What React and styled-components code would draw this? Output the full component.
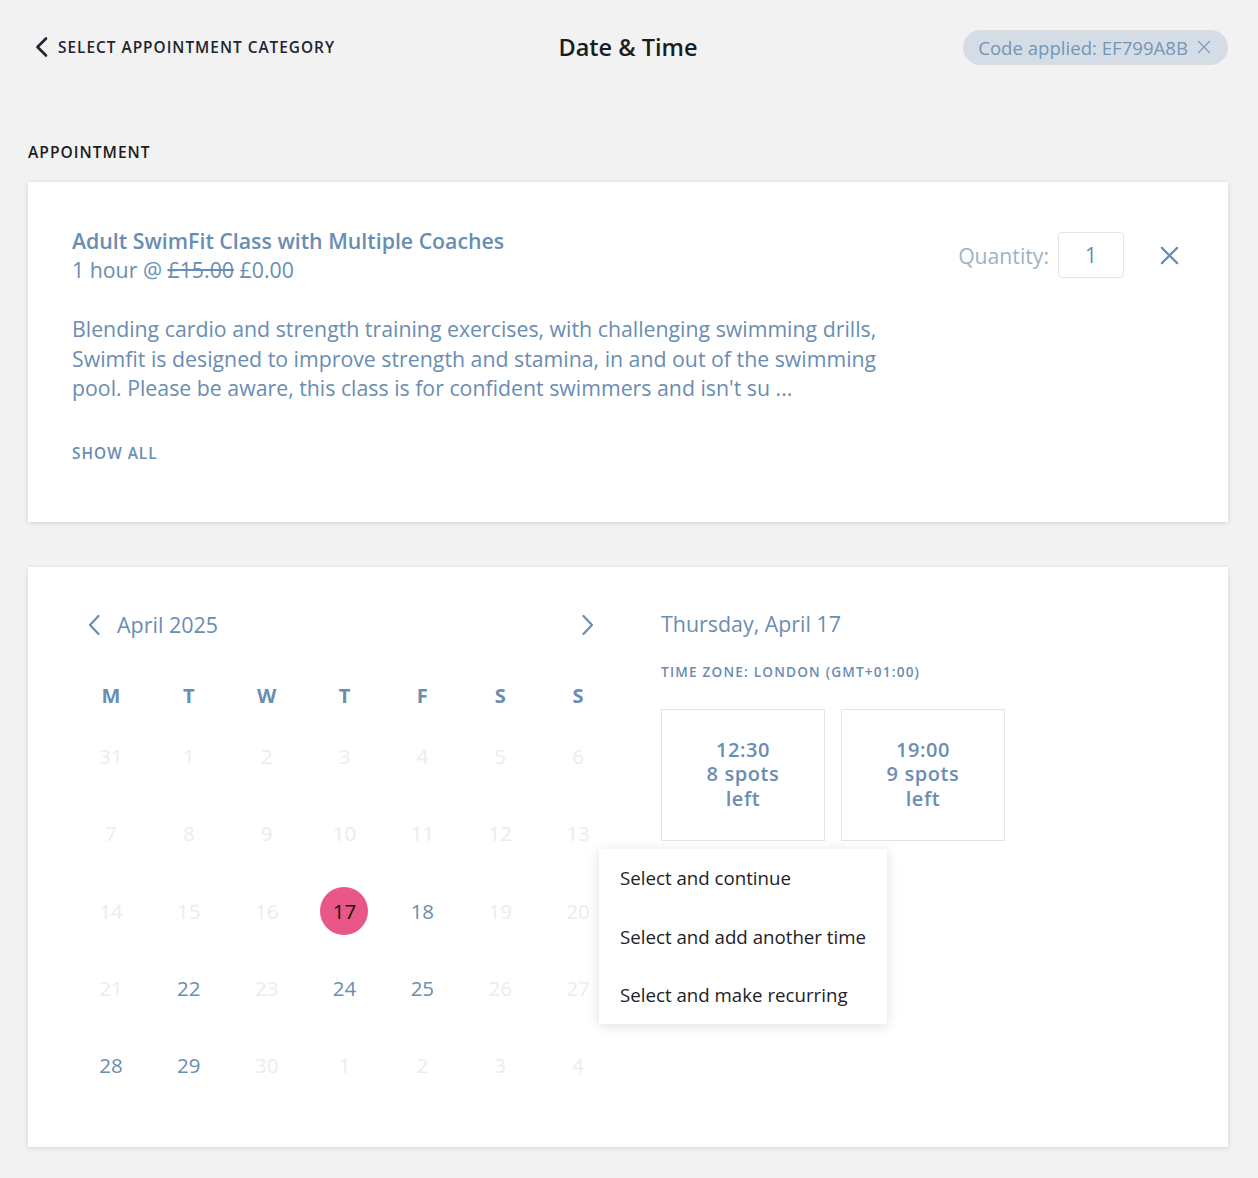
import React from "react";
import styled, { createGlobalStyle } from "styled-components";

const Global = createGlobalStyle`
  html, body { margin: 0; padding: 0; background: #f2f2f2; }
  body { font-family: "Open Sans", "Noto Sans", Arial, sans-serif; -webkit-font-smoothing: antialiased; }
  * { box-sizing: border-box; }
`;

const BLUE = "#6a8db2";
const FAINT = "#e9edf2";

const Page = styled.div`
  padding: 0 30px 30px 28px;
  min-height: 1178px;
`;

const Header = styled.header`
  display: grid;
  grid-template-columns: 1fr auto 1fr;
  align-items: center;
  height: 94px;
`;

const BackLink = styled.a`
  display: flex;
  align-items: center;
  gap: 9px;
  padding-left: 7px;
  color: #1d2430;
  font-size: 15.4px;
  font-weight: 600;
  letter-spacing: 1px;
  text-transform: uppercase;
  cursor: pointer;
  justify-self: start;
`;

const Title = styled.h1`
  margin: 0;
  font-size: 23.5px;
  font-weight: 600;
  color: #1a1d22;
`;

const Chip = styled.div`
  justify-self: end;
  display: flex;
  align-items: center;
  gap: 9px;
  height: 35px;
  padding: 0 17px 0 15px;
  border-radius: 18px;
  background: #d4dde6;
  color: #7596b6;
  font-size: 18.6px;
`;

const SectionLabel = styled.div`
  margin-top: 48px;
  margin-bottom: 20px;
  font-size: 15.6px;
  line-height: 20px;
  font-weight: 600;
  letter-spacing: 1px;
  color: #1a1d22;
`;

const Card = styled.section`
  background: #fff;
  box-shadow: 0 1px 5px rgba(0, 0, 0, 0.13);
  margin-top: ${(p) => p.$gap || 0}px;
`;

const AppointmentCard = styled(Card)`
  display: flex;
  justify-content: space-between;
  align-items: flex-start;
  padding: 44px 49px 58px 44px;
`;

const Details = styled.div`
  color: ${BLUE};
`;

const ClassName = styled.div`
  font-size: 21.3px;
  line-height: 29px;
  font-weight: 600;
`;

const Price = styled.div`
  font-size: 21.3px;
  line-height: 29px;
  s { text-decoration-thickness: 1.5px; }
`;

const Description = styled.p`
  margin: 30px 0 0;
  font-size: 21.3px;
  line-height: 29.5px;
  width: 820px;
`;

const ShowAll = styled.div`
  margin-top: 41px;
  font-size: 15.4px;
  line-height: 20px;
  font-weight: 600;
  letter-spacing: 1px;
`;

const QuantityGroup = styled.div`
  display: flex;
  align-items: center;
  margin-top: 6px;
`;

const QuantityLabel = styled.span`
  font-size: 21.2px;
  color: #9db2c7;
  margin-right: 9px;
`;

const QuantityBox = styled.div`
  width: 66px;
  height: 46px;
  border: 1px solid #e2e6eb;
  border-radius: 4px;
  display: flex;
  align-items: center;
  justify-content: center;
  font-size: 21px;
  color: ${BLUE};
`;

const IconButton = styled.span`
  display: inline-flex;
  align-items: center;
  justify-content: center;
  color: ${(p) => p.$color || BLUE};
  margin-left: ${(p) => p.$ml || 0}px;
  cursor: pointer;
`;

const BookingCard = styled(Card)`
  display: flex;
  gap: 44px;
  padding: 36px 44px 43px 44px;
`;

const Calendar = styled.div`
  width: 545px;
  flex: none;
`;

const MonthNav = styled.div`
  display: flex;
  align-items: center;
  width: 538px;
  height: 44px;
`;

const NavButton = styled.span`
  width: 44px;
  height: 44px;
  display: flex;
  align-items: center;
  justify-content: center;
  color: ${BLUE};
  cursor: pointer;
`;

const MonthLabel = styled.div`
  flex: 1;
  font-size: 21.5px;
  color: ${BLUE};
  margin-left: 1px;
`;

const WeekHeader = styled.div`
  display: grid;
  grid-template-columns: repeat(7, 1fr);
  height: 46px;
  margin-top: 26px;
  align-items: center;
`;

const WeekDay = styled.div`
  text-align: center;
  font-size: 20px;
  font-weight: 700;
  color: ${BLUE};
`;

const DaysGrid = styled.div`
  display: grid;
  grid-template-columns: repeat(7, 1fr);
  grid-auto-rows: 77.3px;
  margin-top: -1px;
`;

const Day = styled.div`
  display: flex;
  align-items: center;
  justify-content: center;
  font-size: 20.5px;
  color: ${(p) => (p.$selected ? "#111" : p.$available ? BLUE : FAINT)};
  font-weight: ${(p) => (p.$available ? 500 : 400)};
`;

const SelectedDot = styled.span`
  width: 48px;
  height: 48px;
  border-radius: 50%;
  background: #e95688;
  display: flex;
  align-items: center;
  justify-content: center;
`;

const Slots = styled.div`
  flex: 1;
  color: ${BLUE};
`;

const DateTitle = styled.div`
  font-size: 21.4px;
  line-height: 28px;
  margin-top: 7px;
`;

const TimeZone = styled.div`
  margin-top: 25px;
  font-size: 13.6px;
  line-height: 18px;
  font-weight: 600;
  letter-spacing: 1.2px;
`;

const SlotRow = styled.div`
  display: flex;
  gap: 16px;
  margin-top: 28px;
`;

const SlotWrap = styled.div`
  position: relative;
`;

const Slot = styled.div`
  width: 164px;
  height: 132px;
  border: 1px solid #dfe4ea;
  display: flex;
  flex-direction: column;
  align-items: center;
  justify-content: center;
  text-align: center;
  font-size: 20px;
  line-height: 24.5px;
  font-weight: 600;
  letter-spacing: 0.6px;
  cursor: pointer;
`;

const Menu = styled.ul`
  position: absolute;
  top: 140px;
  left: -62px;
  width: 288px;
  margin: 0;
  padding: 0;
  list-style: none;
  background: #fff;
  box-shadow: 0 2px 12px rgba(0, 0, 0, 0.13);
  z-index: 2;
`;

const MenuItem = styled.li`
  height: 58.5px;
  display: flex;
  align-items: center;
  padding-left: 21px;
  font-size: 18.7px;
  color: #1e2126;
  cursor: pointer;
`;

const BackChevron = () => (
  <svg width="14" height="20" viewBox="0 0 14 20" fill="none">
    <path d="M11 1.5 L2.5 10 L11 18.5" stroke="#1d2430" strokeWidth="2.6" strokeLinecap="round" strokeLinejoin="round" />
  </svg>
);

const Chevron = ({ dir }) => (
  <svg width="14" height="22" viewBox="0 0 14 22" fill="none">
    <path
      d={dir === "left" ? "M11.5 2 L3 11 L11.5 20" : "M2.5 2 L11 11 L2.5 20"}
      stroke="currentColor"
      strokeWidth="2.2"
      strokeLinecap="round"
      strokeLinejoin="round"
    />
  </svg>
);

const Cross = ({ size, width }) => (
  <svg width={size} height={size} viewBox="0 0 20 20" fill="none">
    <path d="M2 2 L18 18 M18 2 L2 18" stroke="currentColor" strokeWidth={width} strokeLinecap="round" />
  </svg>
);

const weekDays = ["M", "T", "W", "T", "F", "S", "S"];
const days = [
  31, 1, 2, 3, 4, 5, 6,
  7, 8, 9, 10, 11, 12, 13,
  14, 15, 16, 17, 18, 19, 20,
  21, 22, 23, 24, 25, 26, 27,
  28, 29, 30, 1, 2, 3, 4,
];
const available = new Set([17, 18, 22, 24, 25, 28, 29]);

const slots = [
  { time: "12:30", spots: 8, menu: true },
  { time: "19:00", spots: 9, menu: false },
];

export default function App() {
  return (
    <>
      <Global />
      <Page>
        <Header>
          <BackLink>
            <BackChevron />
            Select appointment category
          </BackLink>
          <Title>Date &amp; Time</Title>
          <Chip>
            Code applied: EF799A8B
            <IconButton $color="#7596b6">
              <Cross size={14} width={1.8} />
            </IconButton>
          </Chip>
        </Header>

        <SectionLabel>APPOINTMENT</SectionLabel>

        <AppointmentCard>
          <Details>
            <ClassName>Adult SwimFit Class with Multiple Coaches</ClassName>
            <Price>
              1 hour @ <s>£15.00</s> £0.00
            </Price>
            <Description>
              Blending cardio and strength training exercises, with challenging swimming drills,
              Swimfit is designed to improve strength and stamina, in and out of the swimming
              pool. Please be aware, this class is for confident swimmers and isn't su ...
            </Description>
            <ShowAll>SHOW ALL</ShowAll>
          </Details>
          <QuantityGroup>
            <QuantityLabel>Quantity:</QuantityLabel>
            <QuantityBox>1</QuantityBox>
            <IconButton $ml={36}>
              <Cross size={19} width={2.4} />
            </IconButton>
          </QuantityGroup>
        </AppointmentCard>

        <BookingCard $gap={45}>
          <Calendar>
            <MonthNav>
              <NavButton>
                <Chevron dir="left" />
              </NavButton>
              <MonthLabel>April 2025</MonthLabel>
              <NavButton>
                <Chevron dir="right" />
              </NavButton>
            </MonthNav>
            <WeekHeader>
              {weekDays.map((d, i) => (
                <WeekDay key={i}>{d}</WeekDay>
              ))}
            </WeekHeader>
            <DaysGrid>
              {days.map((d, i) => {
                const inMonth = !(i === 0 || i > 29);
                const isAvail = inMonth && available.has(d);
                const selected = inMonth && d === 17;
                return (
                  <Day key={i} $available={isAvail} $selected={selected}>
                    {selected ? <SelectedDot>{d}</SelectedDot> : d}
                  </Day>
                );
              })}
            </DaysGrid>
          </Calendar>

          <Slots>
            <DateTitle>Thursday, April 17</DateTitle>
            <TimeZone>TIME ZONE: LONDON (GMT+01:00)</TimeZone>
            <SlotRow>
              {slots.map((s) => (
                <SlotWrap key={s.time}>
                  <Slot>
                    <span>{s.time}</span>
                    <span>{s.spots} spots</span>
                    <span>left</span>
                  </Slot>
                  {s.menu && (
                    <Menu>
                      <MenuItem>Select and continue</MenuItem>
                      <MenuItem>Select and add another time</MenuItem>
                      <MenuItem>Select and make recurring</MenuItem>
                    </Menu>
                  )}
                </SlotWrap>
              ))}
            </SlotRow>
          </Slots>
        </BookingCard>
      </Page>
    </>
  );
}
